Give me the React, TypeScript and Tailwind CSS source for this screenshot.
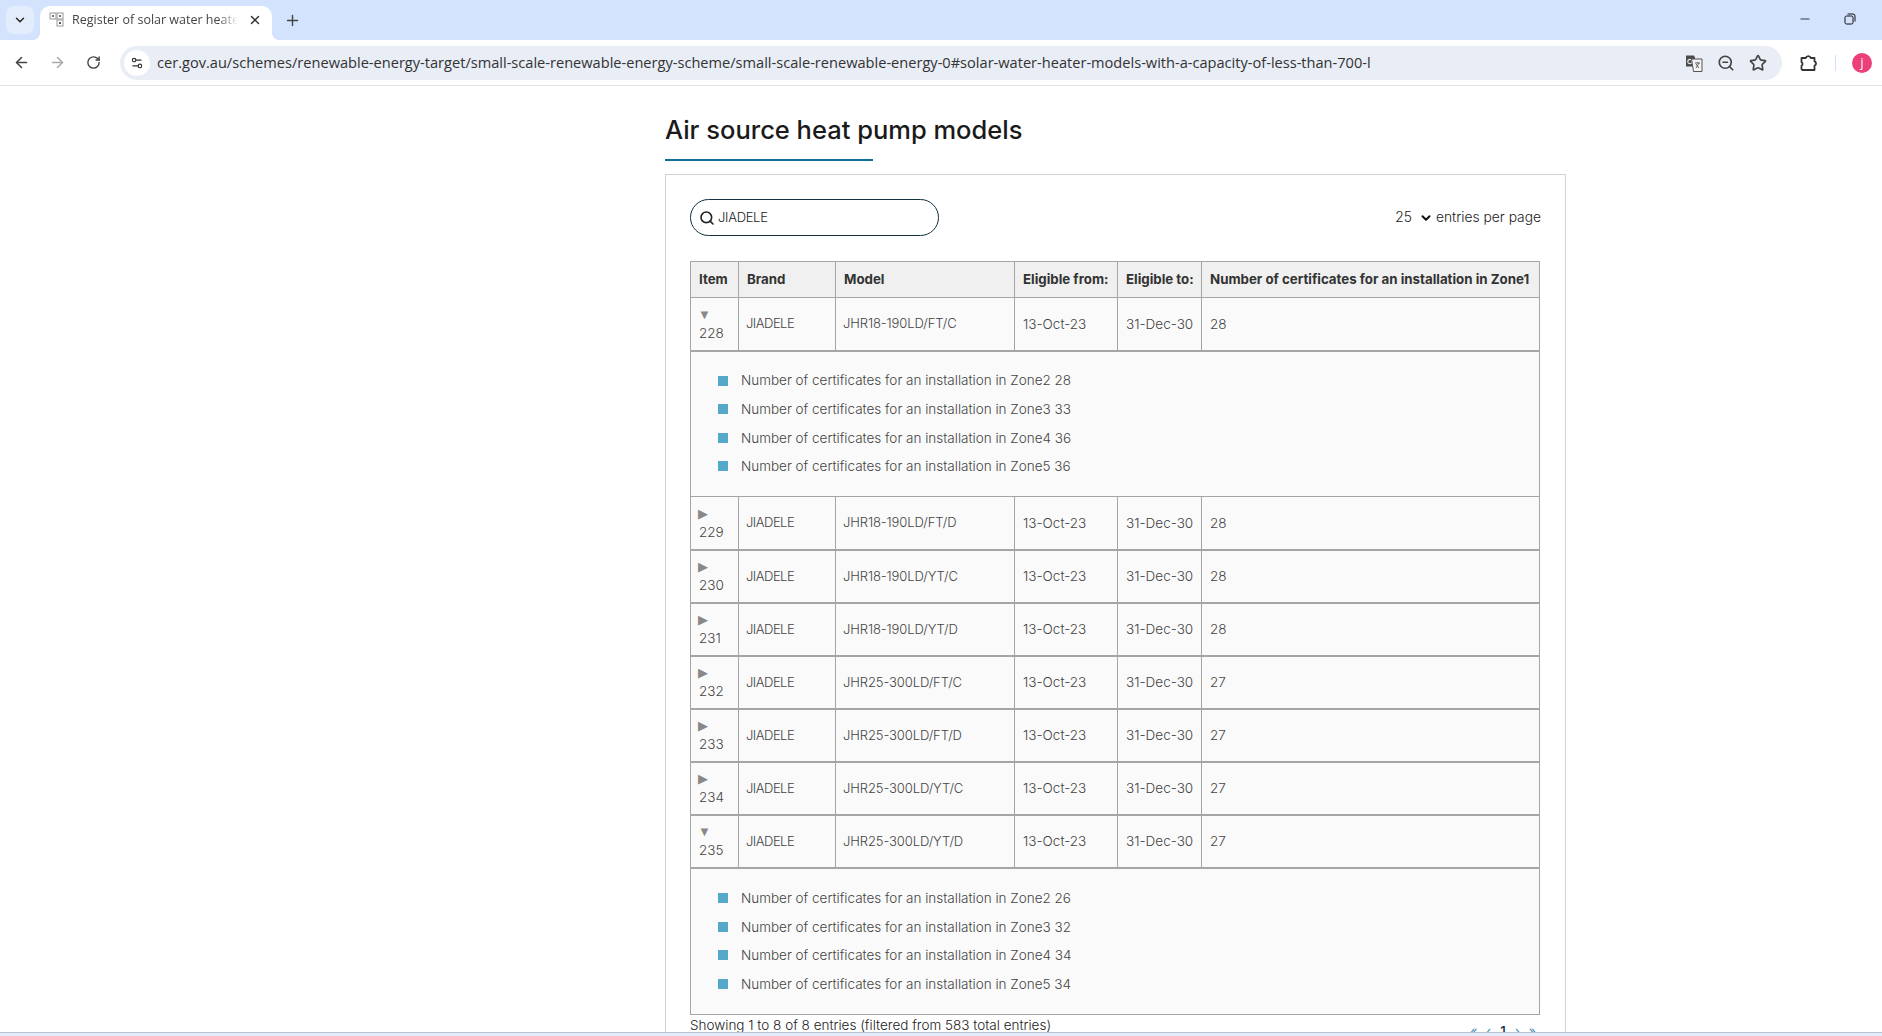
import React from 'react';
import { ArrowLeft, ArrowRight, ChevronDown, Minus, Plus, RotateCw, Search, Settings2, Star, X, ZoomOut } from 'lucide-react';

type Row = { item: number; model: string; zone1: number; open: boolean; zones?: number[] };

const rows: Row[] = [
  { item: 228, model: 'JHR18-190LD/FT/C', zone1: 28, open: true, zones: [28, 33, 36, 36] },
  { item: 229, model: 'JHR18-190LD/FT/D', zone1: 28, open: false },
  { item: 230, model: 'JHR18-190LD/YT/C', zone1: 28, open: false },
  { item: 231, model: 'JHR18-190LD/YT/D', zone1: 28, open: false },
  { item: 232, model: 'JHR25-300LD/FT/C', zone1: 27, open: false },
  { item: 233, model: 'JHR25-300LD/FT/D', zone1: 27, open: false },
  { item: 234, model: 'JHR25-300LD/YT/C', zone1: 27, open: false },
  { item: 235, model: 'JHR25-300LD/YT/D', zone1: 27, open: true, zones: [26, 32, 34, 34] },
];

const headers = ['Item', 'Brand', 'Model', 'Eligible from:', 'Eligible to:', 'Number of certificates for an installation in Zone1'];

const Favicon = () => (
  <svg width="16" height="16" viewBox="0 0 16 16" className="shrink-0">
    <rect x="1" y="1" width="6" height="6" fill="none" stroke="#999" />
    <rect x="8" y="1" width="6" height="6" fill="none" stroke="#999" />
    <rect x="8" y="8" width="6" height="6" fill="none" stroke="#999" />
    <rect x="3" y="3" width="2" height="2" fill="#777" />
    <rect x="10" y="3" width="2" height="2" fill="#777" />
    <rect x="10" y="10" width="2" height="2" fill="#555" />
  </svg>
);

const TranslateIcon = () => (
  <svg width="18" height="18" viewBox="0 0 18 18" className="shrink-0">
    <path d="M1 1.5h8l1 2v9H1z" fill="#4a4a4a" />
    <circle cx="5" cy="7.5" r="2.2" fill="none" stroke="#ddd" strokeWidth="1.2" />
    <path d="M6.5 5h10.5v12.5H8.5z" fill="#f3f3f3" stroke="#555" strokeWidth="1" />
    <path d="M10 9h5M12.5 8v1M11 14l3-5M11 10l3 4" stroke="#555" strokeWidth="0.9" fill="none" />
  </svg>
);

const RestoreIcon = () => (
  <svg width="12" height="12" viewBox="0 0 12 12" fill="none" stroke="#111" strokeWidth="1">
    <rect x="1" y="3" width="8" height="8" rx="1.5" />
    <path d="M3.5 1h5.5a2 2 0 0 1 2 2v5.5" />
  </svg>
);

const ExtensionIcon = () => (
  <svg width="20" height="20" viewBox="0 0 20 20" fill="none" stroke="#333" strokeWidth="1.8" strokeLinejoin="round" className="ml-[17px] shrink-0">
    <path d="M2.5 5h4.3a2.6 2.6 0 0 1 5 0h3.7v3.4a2.2 2.2 0 0 1 0 4.2v4.4H3.5l-1-1v-3.2a2 2 0 0 0 0-3.6z" />
  </svg>
);

const BrowserChrome = () => (
  <div className="shrink-0 font-['Open_Sans',sans-serif]">
    <div className="h-10 bg-[#d3e3fd] flex items-end">
      <div className="w-[28px] h-[28px] ml-[6px] mb-[6px] rounded-lg bg-[#e3ecfb] flex items-center justify-center">
        <ChevronDown size={14} strokeWidth={2.5} className="text-[#222]" />
      </div>
      <div className="relative w-[232px] h-[34px] ml-[6px] bg-white rounded-t-[10px] flex items-center pl-[9px] pr-[10px] pb-[6px]">
        <div className="absolute -left-[8px] bottom-0 w-[8px] h-[8px] bg-[radial-gradient(circle_at_0_0,transparent_8px,white_8px)]" />
        <div className="absolute -right-[8px] bottom-0 w-[8px] h-[8px] bg-[radial-gradient(circle_at_100%_0,transparent_8px,white_8px)]" />
        <Favicon />
        <span className="ml-[7px] text-[12.5px] text-[#444] w-[166px] overflow-hidden whitespace-nowrap [mask-image:linear-gradient(to_right,black_88%,transparent)]">Register of solar water heaters</span>
        <X size={14} strokeWidth={2.5} className="ml-auto text-[#333]" />
      </div>
      <Plus size={17} className="ml-[12px] mb-[11px] text-[#444]" />
      <div className="ml-auto flex items-center mb-[14px] gap-[32px] pr-[26px]">
        <Minus size={14} className="text-[#111]" strokeWidth={1.4} />
        <RestoreIcon />
      </div>
    </div>
    <div className="h-[46px] bg-white border-b border-[#e2e2e2] flex items-center">
      <ArrowLeft size={17} strokeWidth={2.2} className="ml-[13px] text-[#444]" />
      <ArrowRight size={17} strokeWidth={2.2} className="ml-[19px] text-[#aaa]" />
      <RotateCw size={15} strokeWidth={2.2} className="ml-[20px] text-[#444]" />
      <div className="ml-[19px] w-[1662px] h-[34px] rounded-full bg-[#e9edf6] flex items-center pl-[4px] pr-[15px]">
        <div className="w-[26px] h-[26px] rounded-full bg-white flex items-center justify-center">
          <Settings2 size={14} className="text-[#333]" />
        </div>
        <span className="ml-[7px] text-[14.6px] text-[#333] whitespace-nowrap">cer.gov.au/schemes/renewable-energy-target/small-scale-renewable-energy-scheme/small-scale-renewable-energy-0#solar-water-heater-models-with-a-capacity-of-less-than-700-l</span>
        <div className="ml-auto flex items-center gap-[14px]">
          <TranslateIcon />
          <ZoomOut size={18} strokeWidth={2.2} className="text-[#444]" />
          <Star size={18} strokeWidth={2.2} className="text-[#444]" />
        </div>
      </div>
      <ExtensionIcon />
      <div className="ml-[16px] w-[1px] h-4 bg-[#cfe0fa]" />
      <div className="ml-[16px] w-5 h-5 rounded-full bg-[#ec407a] text-white text-[12px] flex items-center justify-center">j</div>
    </div>
  </div>
);

const ZoneList = ({ zones }: { zones: number[] }) => (
  <ul className="flex flex-col gap-[8.67px] pl-[27px] pt-[19px] pb-[20px]">
    {zones.map((z, i) => (
      <li key={i} className="flex items-center h-[20px] text-[13.5px] font-light text-[#444]">
        <span className="w-[10px] h-[10px] bg-[#56a8c9] mr-[13px]" />
        Number of certificates for an installation in Zone{i + 2} {z}
      </li>
    ))}
  </ul>
);

const App: React.FC = () => {
  return (
    <div className="h-screen flex flex-col overflow-hidden bg-white font-['Inter',sans-serif]">
      <BrowserChrome />

      <main className="flex-1 min-h-0 overflow-hidden pl-[665px]">
        <div className="w-[901px]">
          <h2 className="pt-[26px] pb-[11px] text-[25.5px] leading-[36px] font-medium text-[#1a1a1a]">Air source heat pump models</h2>
          <div className="w-[208px] h-[2px] bg-[#0f6e96]" />

          <div className="mt-[13px] border border-[#d2d2d2] px-[24px] pt-[24px]">
            <div className="flex items-center justify-between">
              <div className="w-[249px] h-[37px] rounded-full border border-[#12303f] flex items-center pl-[8px]">
                <Search size={16} strokeWidth={2.4} className="text-[#222]" />
                <span className="ml-[3px] text-[13px] tracking-[-0.3px] font-light text-[#222]">JIADELE</span>
              </div>
              <div className="flex items-center text-[13.8px] font-light text-[#222]">
                <span>25</span>
                <ChevronDown size={14} strokeWidth={3.5} className="ml-[7px] mr-[3px] text-[#111]" />
                <span>entries per page</span>
              </div>
            </div>

            <table className="mt-[25px] w-[850px] table-fixed border-collapse border border-[#a5a5a5] text-[13.5px] text-[#444]">
              <colgroup>
                <col className="w-[48px]" />
                <col className="w-[97px]" />
                <col className="w-[179px]" />
                <col className="w-[103px]" />
                <col className="w-[84px]" />
                <col />
              </colgroup>
              <thead>
                <tr className="h-[36px] bg-[#f0f0f0]">
                  {headers.map((h) => (
                    <th key={h} className="border border-[#a5a5a5] px-[8px] text-left text-[13.3px] font-bold text-[#333] whitespace-nowrap">{h}</th>
                  ))}
                </tr>
              </thead>
              <tbody>
                {rows.map((r) => (
                  <React.Fragment key={r.item}>
                    <tr className="h-[53px] bg-[#fafafa] font-light">
                      <td className="border border-[#a5a5a5] border-b-2 px-[8px] leading-[18px]">
                        <span className="block -ml-[1px] text-[13px] leading-[18px] text-[#888] font-['DejaVu_Sans',sans-serif]">{r.open ? '▼' : '▶'}</span>
                        {r.item}
                      </td>
                      <td className="border border-[#a5a5a5] border-b-2 px-[7px] text-[13px] tracking-[-0.5px]">JIADELE</td>
                      <td className="border border-[#a5a5a5] border-b-2 px-[7px] text-[13px] tracking-[-0.1px] whitespace-nowrap">{r.model}</td>
                      <td className="border border-[#a5a5a5] border-b-2 px-[8px] whitespace-nowrap">13-Oct-23</td>
                      <td className="border border-[#a5a5a5] border-b-2 px-[8px] whitespace-nowrap">31-Dec-30</td>
                      <td className="border border-[#a5a5a5] border-b-2 px-[8px]">{r.zone1}</td>
                    </tr>
                    {r.zones && (
                      <tr className="bg-[#fafafa]">
                        <td colSpan={6} className="border border-[#a5a5a5] p-0">
                          <ZoneList zones={r.zones} />
                        </td>
                      </tr>
                    )}
                  </React.Fragment>
                ))}
              </tbody>
            </table>

            <div className="flex justify-between w-[850px] text-[13.5px] font-light text-[#222] leading-[20px]">
              <span>Showing 1 to 8 of 8 entries (filtered from 583 total entries)</span>
              <span className="pt-[6px] pr-[4px] flex gap-[9px] text-[#0f6e96]">
                <span>«</span><span>‹</span><span className="text-[#12303f] font-medium">1</span><span>›</span><span>»</span>
              </span>
            </div>
          </div>
        </div>
      </main>

      <div className="h-[4px] shrink-0 border-t border-[#b8c4d4] bg-[#e2ebf9]" />
    </div>
  );
};

export default App;
